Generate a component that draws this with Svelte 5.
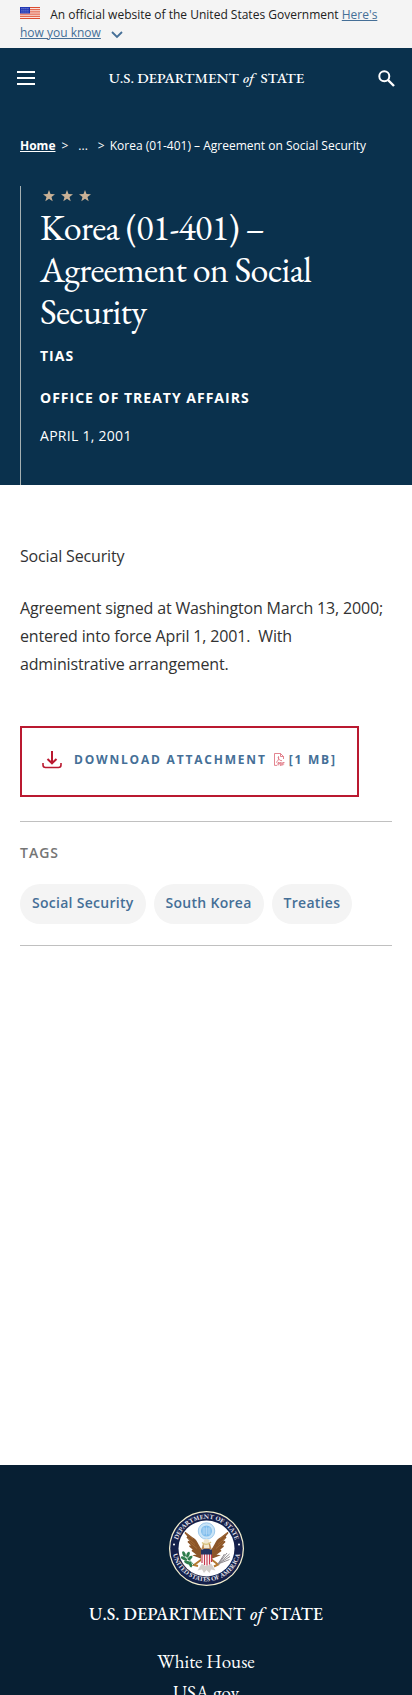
<script>
  const tags = ['Social Security', 'South Korea', 'Treaties'];
  const footerLinks = ['White House', 'USA.gov'];
  const stripes = [0, 2, 4, 6, 8, 10, 12];
  const star = 'M6 0 L7.5 4.1 L12 4.3 L8.5 7 L9.7 11.3 L6 8.8 L2.3 11.3 L3.5 7 L0 4.3 L4.5 4.1 Z';
</script>

<div class="page">
  <section class="gov" aria-label="Official government website">
    <svg class="flag" viewBox="0 0 20 13" preserveAspectRatio="none" aria-hidden="true">
      <rect width="20" height="13" fill="#fff" />
      {#each stripes as y}
        <rect {y} width="20" height="1" fill="#db3e1f" />
      {/each}
      <rect width="10" height="7" fill="#1e33b1" />
      {#each [1, 3, 5] as y}
        {#each [1, 3, 5, 7] as x}
          <rect x={x + 0.5} {y} width="0.9" height="0.9" fill="#b9c3f5" />
        {/each}
      {/each}
    </svg>
    <span>An official website of the United States Government</span>
    <a class="know" href="#know">Here's how you know</a>
    <svg class="chev" viewBox="0 0 12 8" aria-hidden="true">
      <path d="M1 1 L6 6 L11 1" fill="none" stroke="#456f97" stroke-width="1.8" />
    </svg>
  </section>

  <div class="blue">
    <header>
      <button class="icon" type="button" aria-label="Menu">
        <svg width="18" height="14" viewBox="0 0 18 14"><path d="M0 1H18M0 7H18M0 13H18" stroke="#fff" stroke-width="2" /></svg>
      </button>
      <a class="wordmark" href="#home">U.S. DEPARTMENT <i>of</i> STATE</a>
      <button class="icon" type="button" aria-label="Search">
        <svg width="17" height="17" viewBox="0 0 17 17" fill="none" stroke="#fff">
          <circle cx="6.3" cy="6.3" r="5" stroke-width="2" />
          <path d="M10 10L16 16" stroke-width="2.4" />
        </svg>
      </button>
    </header>

    <nav aria-label="Breadcrumb">
      <a href="#home">Home</a><span>&gt;</span><span class="dots">...</span><span class="sep">&gt;</span><span class="here">Korea (01-401) – Agreement on Social Security</span>
    </nav>

    <div class="hero">
      <svg class="stars" viewBox="0 0 48 12" aria-hidden="true" fill="#c9b196">
        <path d={star} />
        <path d={star} transform="translate(18 0)" />
        <path d={star} transform="translate(36 0)" />
      </svg>
      <h1>Korea (01-401) – Agreement on Social Security</h1>
      <p class="kind">TIAS</p>
      <p class="office">OFFICE OF TREATY AFFAIRS</p>
      <p class="date">APRIL 1, 2001</p>
    </div>
  </div>

  <main>
    <div class="entry">
      <p>Social Security</p>
      <p>Agreement signed at Washington March 13, 2000; entered into force April 1, 2001.&nbsp; With administrative arrangement.</p>
    </div>
    <a class="download" href="#attachment">
      <svg width="20" height="18" viewBox="0 0 20 18" fill="none" stroke="#ba1930" stroke-width="2" aria-hidden="true">
        <path d="M10 0V12M5.5 8L10 12.3L14.5 8" />
        <path d="M1 12V14Q1 16.5 3.5 16.5H16.5Q19 16.5 19 14V12" stroke-width="1.6" />
      </svg>
      <span>DOWNLOAD ATTACHMENT</span>
      <svg class="pdf" width="11" height="13" viewBox="0 0 11 13" fill="none" stroke="#dc6673" stroke-width="0.8" aria-hidden="true">
        <path d="M3 12.4H0.5V0.5H6.5L9.5 3.5V6M6.5 0.5V3.5H9.5" />
        <path d="M2 9.5C4 8.5 5.2 5.5 4.5 3.5C3.5 4.5 5 7.8 8 7.7" />
        <path d="M4 12.5V9.5H5.3V11H4M6.3 9.5V12.5H7.3V9.5ZM8.7 12.5V9.5H10.5M8.7 11H10.2" />
      </svg>
      <span>[1 MB]</span>
    </a>
    <section class="tags">
      <h2>TAGS</h2>
      <ul>
        {#each tags as tag}
          <li><a href="#tag">{tag}</a></li>
        {/each}
      </ul>
    </section>
  </main>

  <footer>
    <svg class="seal" viewBox="0 0 150 150" role="img" aria-label="Department of State seal">
      <defs>
        <path id="arc-top" d="M15.5 75 A59.5 59.5 0 0 1 134.5 75" />
        <path id="arc-bottom" d="M6.5 72 A68.5 68.5 0 0 0 143.5 72" />
      </defs>
      <circle cx="75" cy="75" r="75" fill="#f4efcf" />
      <circle cx="75" cy="75" r="72.5" fill="#14204a" />
      <circle cx="75" cy="75" r="56" fill="#fff" />
      <g font-family="'EB Garamond', 'Liberation Serif', serif" font-size="13" font-weight="700" fill="#e6e3ea" text-anchor="middle">
        <text><textPath href="#arc-top" startOffset="50%">DEPARTMENT OF STATE</textPath></text>
        <text><textPath href="#arc-bottom" startOffset="50%">UNITED STATES OF AMERICA</textPath></text>
      </g>
      <circle cx="10" cy="67" r="2" fill="#fff" />
      <circle cx="140" cy="67" r="2" fill="#fff" />
      <circle cx="75" cy="40" r="16.5" fill="#c9e4f7" stroke="#85b9e4" stroke-width="1.5" />
      <circle cx="75" cy="40" r="11" fill="#7ebcec" />
      <path d="M66 36H84M66 40H84M66 44H84M70 32V48M75 31V49M80 32V48" stroke="#cfe7f8" stroke-width="1" />
      <path d="M67 80C57 74 58 60 48 55L32 43L43 56L36 52L47 64L38 61L49 72L41 70L53 80L46 79L58 88L52 89L67 95Z" fill="#8b5529" stroke="#8b5529" stroke-width="3" />
      <path d="M83 80C93 74 92 60 102 55L118 43L107 56L114 52L103 64L112 61L101 72L109 70L97 80L104 79L92 88L98 89L83 95Z" fill="#8b5529" stroke="#8b5529" stroke-width="3" />
      <path d="M33 43L48 56M38 54L52 67M42 63L56 75M117 43L102 56M112 54L98 67M108 63L94 75" stroke="#a9713a" stroke-width="1.5" />
      <path d="M65 76L68 65L75 60L82 65L85 76Z" fill="#bf8c55" />
      <path d="M69 62Q70 55 77 56L82 60L79 62L81 74H70Z" fill="#f0e6cf" />
      <path d="M66 63Q74 71 84 62" fill="none" stroke="#d7c37c" stroke-width="2.5" />
      <path d="M65 97L50 108L58 110M85 97L98 107L90 111" fill="none" stroke="#b57a31" stroke-width="4" />
      <path d="M67 103L57 119L66 117L70 124L75 118L81 124L84 117L93 119L83 103Z" fill="#d3cfcb" />
      <path d="M64 78Q75 73 86 78V101Q85 107 75 110Q65 107 64 101Z" fill="#fff" />
      <path d="M66 86V104M71 86V108M76 86V109M81 86V107M85 86V102" stroke="#c4394e" stroke-width="2.4" />
      <path d="M64 78Q75 73 86 78V87H64Z" fill="#24335f" />
      <g fill="#2f7d4c">
        <ellipse cx="30" cy="86" rx="3" ry="6" transform="rotate(-25 30 86)" />
        <ellipse cx="38" cy="87" rx="3" ry="6" transform="rotate(25 38 87)" />
        <ellipse cx="30" cy="95" rx="3" ry="7" transform="rotate(-60 30 95)" />
        <ellipse cx="42" cy="94" rx="3" ry="6" transform="rotate(50 42 94)" />
        <ellipse cx="37" cy="103" rx="3" ry="7" transform="rotate(-70 37 103)" />
        <ellipse cx="43" cy="107" rx="3" ry="6" transform="rotate(-20 43 107)" />
      </g>
      <path d="M30 86L50 108" stroke="#2f7d4c" stroke-width="1.5" />
      <path d="M98 106L111 86M98 106L116 84M98 106L121 86M98 106L122 91M98 106L121 97" stroke="#918d92" stroke-width="2" />
    </svg>
    <a class="wordmark big" href="#home">U.S. DEPARTMENT <i>of</i> STATE</a>
    <ul>
      {#each footerLinks as link}
        <li><a href="#footer">{link}</a></li>
      {/each}
    </ul>
  </footer>
</div>

<style>
  :global(body) { margin: 0; background: #fff; }
  .page {
    font-family: 'Open Sans', sans-serif;
    color: #323a45;
    max-height: 100vh;
    overflow: hidden;
  }
  a { text-decoration: none; }
  button { border: 0; padding: 0; background: none; font: inherit; cursor: pointer; }
  h1, h2, p, ul { margin: 0; padding: 0; }
  ul { list-style: none; }

  .gov {
    background: #f4f4f4;
    padding: 6px 20px;
    font-size: 12px;
    line-height: 18px;
    color: #212121;
  }
  .flag { width: 20px; height: 12px; margin-right: 7px; }
  .know { color: #456f97; text-decoration: underline; }
  .chev { width: 12px; height: 8px; margin-left: 7px; vertical-align: -2px; }

  .blue { background: #0a314d; color: #fff; }
  header {
    display: flex;
    align-items: center;
    justify-content: space-between;
    height: 60px;
    padding: 0 17px;
  }
  .icon { display: flex; }
  .wordmark {
    font: 500 15px/20px 'EB Garamond', 'Liberation Serif', serif;
    color: #fff;
    white-space: nowrap;
  }
  .wordmark i { margin: 0 3px 0 1px; }
  nav {
    display: flex;
    gap: 6px;
    padding: 29px 20px 31px;
    font-size: 12px;
    line-height: 18px;
  }
  nav a { color: #fff; font-weight: 700; text-decoration: underline; }
  nav .dots { margin: 0 4px; }
  .here { flex: 1; margin-left: -1px; }
  .hero {
    margin-left: 20px;
    padding: 4px 20px 38px 19px;
    border-left: 1px solid #a5b0b2;
    font-size: 14px;
    line-height: 22px;
  }
  .stars { display: block; width: 48px; height: 12px; margin: 0 0 5px 3px; }
  h1 {
    font: 36px/42px 'EB Garamond', 'Liberation Serif', serif;
    letter-spacing: -0.02em;
    margin-bottom: 12px;
  }
  .kind, .office { font-weight: 700; letter-spacing: 1px; }
  .kind { margin-bottom: 20px; }
  .office { margin-bottom: 16px; }
  .date { letter-spacing: 0.02em; }

  main { padding: 57px 20px 519px; }
  .entry {
    display: flex;
    flex-direction: column;
    gap: 24px;
    font-size: 16px;
    line-height: 28px;
    letter-spacing: -0.01em;
    color: #323232;
  }
  .download {
    display: inline-flex;
    align-items: center;
    margin: 48px 0 24px;
    padding: 22px 20px 26px;
    border: 2px solid #ba1930;
    font-size: 12px;
    line-height: 19px;
    font-weight: 700;
    letter-spacing: 0.15em;
    color: #456f97;
    white-space: nowrap;
  }
  .download svg { margin-right: 12px; }
  .download .pdf { margin: 0 4px 0 7px; }
  .tags {
    border-top: 1px solid #c0c0c0;
    border-bottom: 1px solid #c0c0c0;
    padding: 20px 0 21px;
  }
  h2 {
    font-size: 14px;
    line-height: 22px;
    font-weight: 600;
    letter-spacing: 1px;
    color: #757575;
    margin-bottom: 20px;
  }
  .tags ul { display: flex; flex-wrap: wrap; gap: 8px; }
  .tags a {
    display: block;
    padding: 8px 12px 10px;
    border-radius: 20px;
    background: #f4f4f4;
    font-size: 14px;
    line-height: 22px;
    font-weight: 600;
    letter-spacing: 0.02em;
    color: #456f97;
  }

  footer {
    display: flex;
    flex-direction: column;
    align-items: center;
    background: #071f33;
    padding: 46px 20px;
  }
  .seal { width: 75px; height: 75px; }
  .big { margin: 16px 0 20px; font-size: 18px; line-height: 24px; }
  footer ul { text-align: center; }
  footer li a { font: 19px/31px 'EB Garamond', 'Liberation Serif', serif; color: #fff; }
</style>
